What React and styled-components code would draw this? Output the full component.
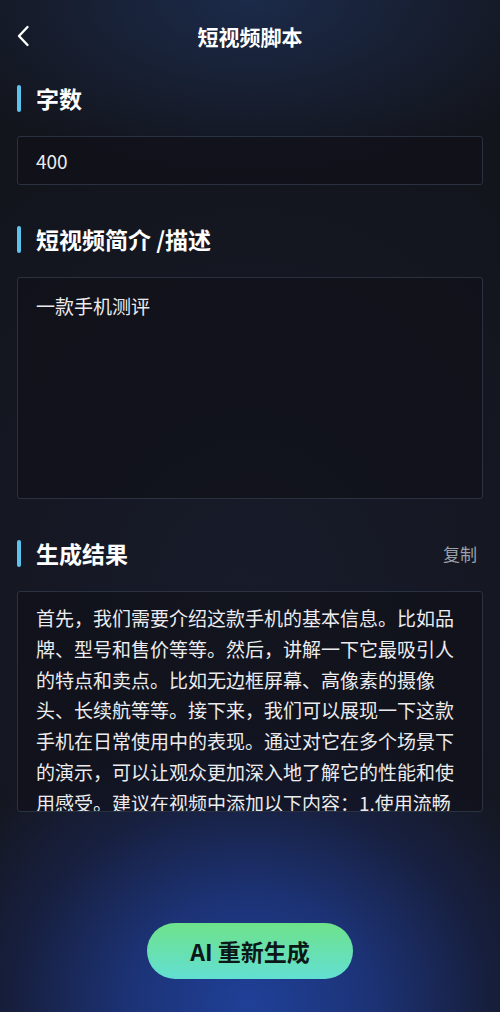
import React from "react";
import styled, { createGlobalStyle } from "styled-components";

const RESULT_TEXT =
  "首先，我们需要介绍这款手机的基本信息。比如品牌、型号和售价等等。然后，讲解一下它最吸引人的特点和卖点。比如无边框屏幕、高像素的摄像头、长续航等等。接下来，我们可以展现一下这款手机在日常使用中的表现。通过对它在多个场景下的演示，可以让观众更加深入地了解它的性能和使用感受。建议在视频中添加以下内容：1.使用流畅度测试；2.拍照效果对比；3.续航测试。最后，总结一下这款手机的优缺点。";

const GlobalStyle = createGlobalStyle`
  * {
    box-sizing: border-box;
  }
  body {
    margin: 0;
    background: #13151d;
    font-family: "Noto Sans CJK SC", "Noto Sans", sans-serif;
  }
`;

function App() {
  return (
    <Page>
      <GlobalStyle />
      <Header>
        <BackButton>
          <svg width="14" height="22" viewBox="0 0 14 22" fill="none">
            <path
              d="M11.5 2 L3 11 L11.5 20"
              stroke="#ffffff"
              strokeWidth="2.4"
              strokeLinecap="round"
              strokeLinejoin="round"
            />
          </svg>
        </BackButton>
        <Title>短视频脚本</Title>
      </Header>

      <Content>
        <SectionHead>
          <SectionTitle>字数</SectionTitle>
        </SectionHead>
        <Field $height={49}>
          <FieldText>400</FieldText>
        </Field>

        <SectionHead $top={41}>
          <SectionTitle>短视频简介 /描述</SectionTitle>
        </SectionHead>
        <Field $height={222} $top>
          <FieldText>一款手机测评</FieldText>
        </Field>

        <SectionHead $top={41}>
          <SectionTitle>生成结果</SectionTitle>
          <CopyLink>复制</CopyLink>
        </SectionHead>
        <ResultBox>
          <ResultText>{RESULT_TEXT}</ResultText>
        </ResultBox>
      </Content>

      <Footer>
        <RegenButton>AI 重新生成</RegenButton>
      </Footer>
    </Page>
  );
}

const Page = styled.div`
  min-height: 1012px;
  display: flex;
  flex-direction: column;
  background:
    radial-gradient(ellipse 340px 290px at 50% 99%, rgba(32, 66, 158, 0.95) 0%, rgba(30, 58, 140, 0.8) 35%, rgba(27, 42, 100, 0.45) 70%, rgba(19, 21, 29, 0) 100%),
    radial-gradient(ellipse 330px 170px at 50% 0%, rgba(30, 48, 85, 0.8) 0%, rgba(19, 21, 29, 0) 100%),
    radial-gradient(ellipse 420px 500px at 50% 60%, rgba(28, 34, 55, 0.5) 0%, rgba(19, 21, 29, 0) 100%),
    #13151d;
`;

const Header = styled.header`
  position: relative;
  height: 72px;
  display: flex;
  align-items: center;
  justify-content: center;
`;

const BackButton = styled.button`
  position: absolute;
  left: 16px;
  top: 25px;
  padding: 0;
  background: none;
  border: none;
  display: flex;
`;

const Title = styled.h1`
  margin: 0;
  color: #ffffff;
  font-size: 21px;
  font-weight: 700;
`;

const Content = styled.main`
  padding: 13px 17px 0;
  display: flex;
  flex-direction: column;
`;

const SectionHead = styled.div`
  height: 27px;
  margin-top: ${(p) => p.$top || 0}px;
  margin-bottom: 24px;
  display: flex;
  align-items: center;
  justify-content: space-between;
`;

const SectionTitle = styled.h2`
  margin: 0;
  display: flex;
  align-items: center;
  gap: 15px;
  color: #ffffff;
  font-size: 23px;
  font-weight: 700;
  line-height: 27px;
  white-space: pre;

  &::before {
    content: "";
    width: 4px;
    height: 27px;
    border-radius: 2px;
    background: #5ec3ec;
  }
`;

const CopyLink = styled.span`
  margin-right: 6px;
  color: #9ca1aa;
  font-size: 17px;
`;

const Field = styled.div`
  height: ${(p) => p.$height}px;
  padding: ${(p) => (p.$top ? "14px 18px" : "0 18px")};
  display: flex;
  align-items: ${(p) => (p.$top ? "flex-start" : "center")};
  background: rgba(14, 15, 22, 0.55);
  border: 1px solid #2a3241;
  border-radius: 3px;
`;

const FieldText = styled.span`
  color: #ececee;
  font-size: 19px;
  line-height: 28px;
`;

const ResultBox = styled.div`
  height: 221px;
  padding: 11px 18px 0;
  overflow: hidden;
  background: rgba(14, 15, 22, 0.55);
  border: 1px solid #2a3241;
  border-radius: 3px;
`;

const ResultText = styled.p`
  margin: 0;
  color: #ececee;
  font-size: 19px;
  line-height: 30.8px;
`;

const Footer = styled.footer`
  flex: 1;
  display: flex;
  justify-content: center;
  align-items: flex-end;
  padding-bottom: 33px;
`;

const RegenButton = styled.button`
  width: 206px;
  height: 56px;
  border: none;
  border-radius: 28px;
  background: linear-gradient(180deg, #6ee28a 0%, #62dfd3 100%);
  color: #0c1717;
  font-family: "Noto Sans CJK SC", "Noto Sans", sans-serif;
  font-size: 23px;
  font-weight: 700;
  white-space: pre;
`;

export default App;
